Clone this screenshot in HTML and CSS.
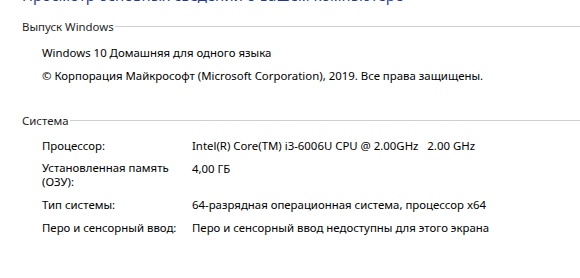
FILE: index.html
```html
<!DOCTYPE html>
<html lang="ru">
<head>
<meta charset="utf-8">
<link rel="stylesheet" href="styles.css">
</head>
<body>
<h1 class="title">Просмотр основных сведений о вашем компьютере</h1>
<section class="group">
  <div class="group-head"><span class="group-name">Выпуск Windows</span><span class="rule"></span></div>
  <div class="edition">
    <div class="line">Windows 10 Домашняя для одного языка</div>
    <div class="line">© Корпорация Майкрософт (Microsoft Corporation), 2019. Все права защищены.</div>
  </div>
</section>
<section class="group sys">
  <div class="group-head"><span class="group-name">Система</span><span class="rule"></span></div>
  <div class="props">
    <div class="k">Процессор:</div><div class="v">Intel(R) Core(TM) i3-6006U CPU @ 2.00GHz&nbsp;&nbsp; 2.00 GHz</div>
    <div class="k wrap">Установленная память (ОЗУ):</div><div class="v">4,00 ГБ</div>
    <div class="k">Тип системы:</div><div class="v">64-разрядная операционная система, процессор x64</div>
    <div class="k">Перо и сенсорный ввод:</div><div class="v">Перо и сенсорный ввод недоступны для этого экрана</div>
  </div>
</section>
</body>
</html>
```

FILE: styles.css
```css
html, body {
  margin: 0;
  background: #ffffff;
}
body {
  font-family: "Noto Sans", "Open Sans", sans-serif;
  font-size: 11.4px;
  color: #000000;
  padding-left: 22px;
  overflow: hidden;
}
.title {
  margin: -15px 0 0 0;
  font-size: 15px;
  font-weight: normal;
  line-height: 20px;
  color: #1e3c96;
}
.group {
  margin-top: 13.5px;
}
.group.sys {
  margin-top: 30px;
}
.group-head {
  display: flex;
  align-items: center;
  height: 15px;
  line-height: 15px;
}
.group-name {
  color: #1e1e1e;
  padding-right: 1px;
}
.rule {
  flex: 1;
  height: 0;
  border-top: 1px solid #cfcfcf;
  margin-top: 1px;
}
.edition {
  padding-left: 20px;
  padding-top: 11px;
}
.line {
  line-height: 15px;
  margin-bottom: 8px;
}
.props {
  display: grid;
  grid-template-columns: 150px 1fr;
  row-gap: 8px;
  padding-left: 20px;
  padding-top: 10px;
  line-height: 15px;
}
.k {
  width: 140px;
}
.k.wrap {
  line-height: 14px;
}
```
